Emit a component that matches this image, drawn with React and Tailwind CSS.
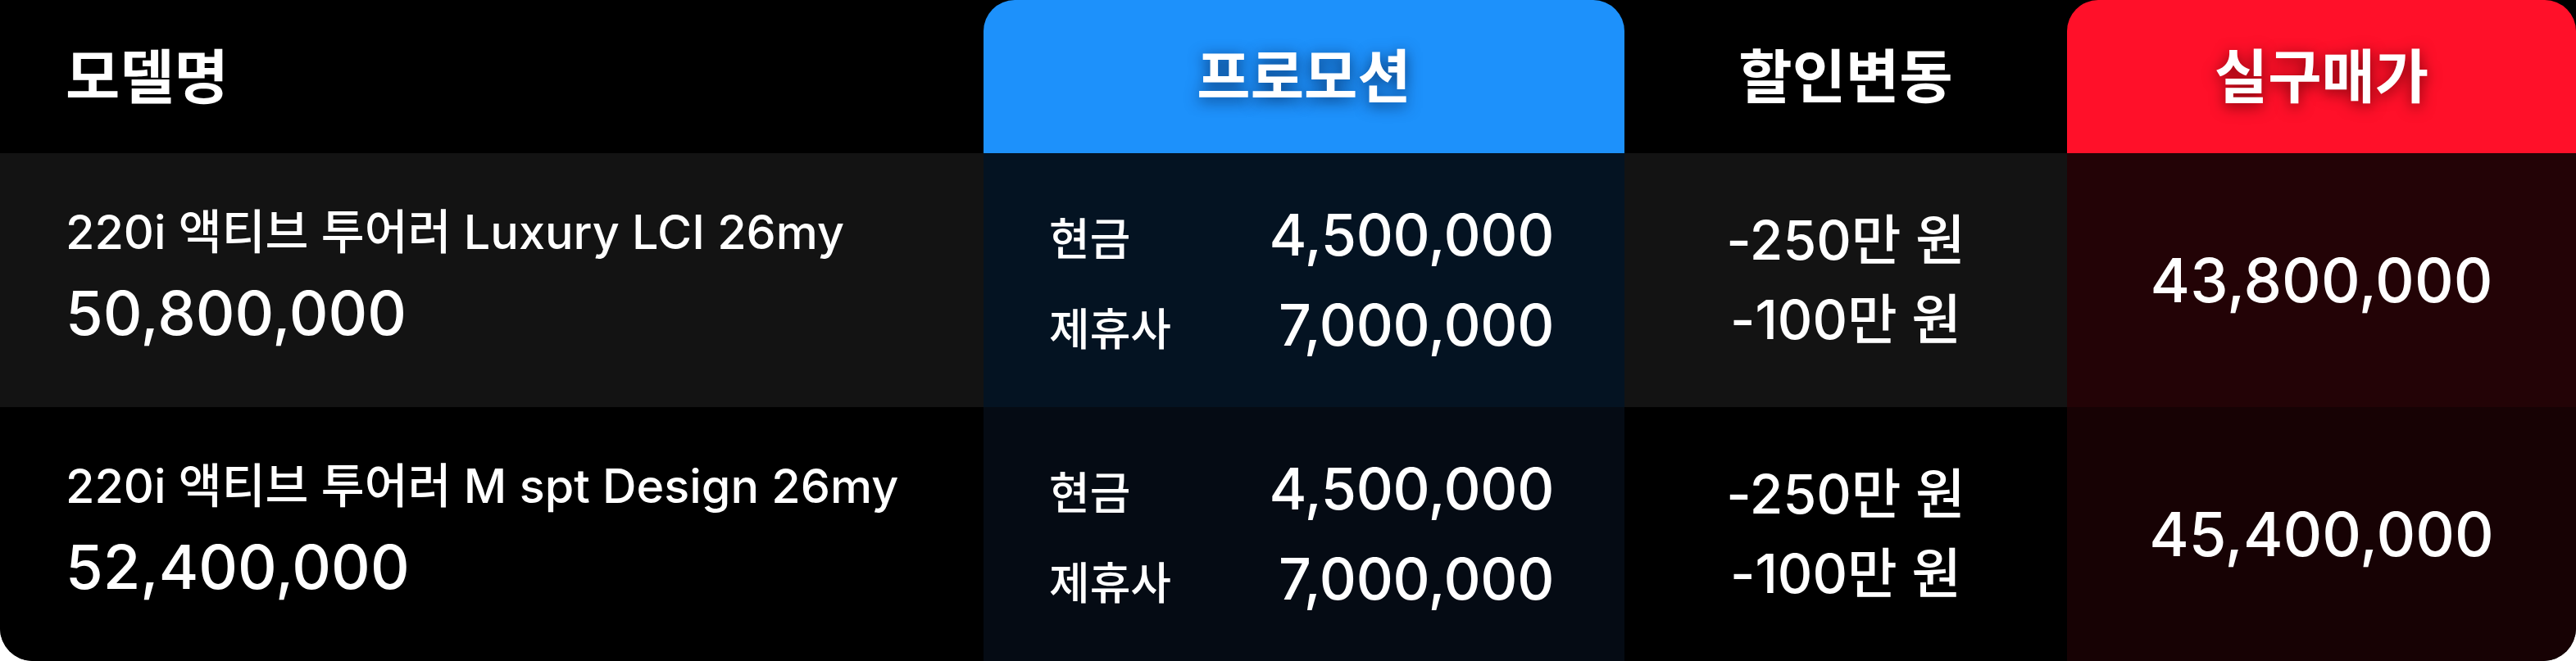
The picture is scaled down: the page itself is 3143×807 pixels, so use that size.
import React from "react";

const rows = [
  {
    name: "220i 액티브 투어러 Luxury LCI 26my",
    price: "50,800,000",
    cash: "4,500,000",
    partner: "7,000,000",
    d1: "-250만 원",
    d2: "-100만 원",
    final: "43,800,000",
    bgA: "bg-[#131313]",
    bgB: "bg-[#041322]",
    bgD: "bg-[#230306]",
  },
  {
    name: "220i 액티브 투어러 M spt Design 26my",
    price: "52,400,000",
    cash: "4,500,000",
    partner: "7,000,000",
    d1: "-250만 원",
    d2: "-100만 원",
    final: "45,400,000",
    bgA: "bg-black",
    bgB: "bg-[#050b14]",
    bgD: "bg-[#170204]",
  },
];

export default function App() {
  return (
    <div className="bg-white w-[3143px] h-[807px]">
      <div className="grid grid-cols-[1200px_782px_540px_621px] grid-rows-[187px_310px_310px] w-[3143px] h-[807px] bg-black rounded-b-[40px] overflow-hidden text-white font-[Inter,'Noto_Sans_CJK_KR',sans-serif]">
        {/* header */}
        <div className="flex items-center pl-[80px] text-[72px] font-bold leading-none">
          모델명
        </div>
        <div className="flex items-center justify-center bg-[#1d91fb] rounded-t-[38px] text-[71px] font-bold leading-none [text-shadow:0_4px_18px_rgba(0,20,60,0.7)]">
          프로모션
        </div>
        <div className="flex items-center justify-center text-[71px] font-bold leading-none">
          할인변동
        </div>
        <div className="flex items-center justify-center bg-[#ff1029] rounded-t-[38px] text-[71px] font-bold leading-none [text-shadow:0_4px_18px_rgba(70,0,0,0.75)]">
          실구매가
        </div>

        {rows.map((r, i) => (
          <React.Fragment key={i}>
            <div className={`${r.bgA} flex flex-col justify-center pl-[80px] pb-[8px] gap-[20px]`}>
              <div className="text-[57.5px] font-medium leading-[1.2]">{r.name}</div>
              <div className="text-[74px] font-medium leading-[1.2]">{r.price}</div>
            </div>
            <div className={`${r.bgB} flex flex-col justify-center pl-[80px] pr-[86px] gap-[26px]`}>
              <div className="flex items-baseline justify-between">
                <span className="text-[54px] font-medium leading-[1.2]">현금</span>
                <span className="text-[70px] font-medium leading-[1.2] tracking-[-0.005em]">{r.cash}</span>
              </div>
              <div className="flex items-baseline justify-between">
                <span className="text-[54px] font-medium leading-[1.2]">제휴사</span>
                <span className="text-[70px] font-medium leading-[1.2] tracking-[-0.005em]">{r.partner}</span>
              </div>
            </div>
            <div className={`${r.bgA} flex flex-col items-center justify-center gap-[18px]`}>
              <div className="text-[66px] font-medium leading-[1.2]">{r.d1}</div>
              <div className="text-[66px] font-medium leading-[1.2]">{r.d2}</div>
            </div>
            <div className={`${r.bgD} flex items-center justify-center`}>
              <div className="text-[74px] font-medium leading-[1.2]">{r.final}</div>
            </div>
          </React.Fragment>
        ))}
      </div>
    </div>
  );
}
